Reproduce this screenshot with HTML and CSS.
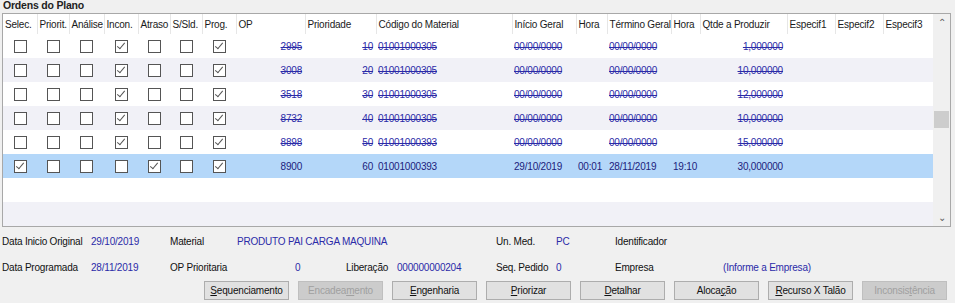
FILE: index.html
```html
<!DOCTYPE html>
<html lang="pt">
<head>
  <meta charset="UTF-8" />
  <title>Ordens do Plano</title>
  <link rel="stylesheet" href="styles.css">
</head>
<body>
  <div class="group-title">Ordens do Plano</div>

  <div class="grid-box">
    <div class="grid-area">
      <table class="grid">
        <colgroup>
          <col style="width:34px"><col style="width:32px"><col style="width:35px"><col style="width:34px">
          <col style="width:32px"><col style="width:32px"><col style="width:34px"><col style="width:69px">
          <col style="width:71px"><col style="width:136px"><col style="width:64px"><col style="width:31px">
          <col style="width:64px"><col style="width:29px"><col style="width:87px"><col style="width:48px">
          <col style="width:48px"><col style="width:50px">
        </colgroup>
        <thead>
          <tr>
            <th>Selec.</th><th>Priorit.</th><th>Análise</th><th>Incon.</th><th>Atraso</th><th>S/Sld.</th><th>Prog.</th>
            <th>OP</th><th>Prioridade</th><th>Código do Material</th><th>Início Geral</th><th>Hora</th>
            <th>Término Geral</th><th>Hora</th><th>Qtde a Produzir</th><th>Especif1</th><th>Especif2</th><th>Especif3</th>
          </tr>
        </thead>
        <tbody>
          <tr class="done">
            <td><span class="cb"></span></td><td><span class="cb"></span></td><td><span class="cb"></span></td>
            <td><span class="cb on"></span></td><td><span class="cb"></span></td><td><span class="cb"></span></td><td><span class="cb on"></span></td>
            <td class="num"><s>2995</s></td><td class="num"><s>10</s></td><td><s>01001000305</s></td><td><s>00/00/0000</s></td><td></td>
            <td><s>00/00/0000</s></td><td></td><td class="num"><s>1,000000</s></td><td></td><td></td><td></td>
          </tr>
          <tr class="done alt">
            <td><span class="cb"></span></td><td><span class="cb"></span></td><td><span class="cb"></span></td>
            <td><span class="cb on"></span></td><td><span class="cb"></span></td><td><span class="cb"></span></td><td><span class="cb on"></span></td>
            <td class="num"><s>3008</s></td><td class="num"><s>20</s></td><td><s>01001000305</s></td><td><s>00/00/0000</s></td><td></td>
            <td><s>00/00/0000</s></td><td></td><td class="num"><s>10,000000</s></td><td></td><td></td><td></td>
          </tr>
          <tr class="done">
            <td><span class="cb"></span></td><td><span class="cb"></span></td><td><span class="cb"></span></td>
            <td><span class="cb on"></span></td><td><span class="cb"></span></td><td><span class="cb"></span></td><td><span class="cb on"></span></td>
            <td class="num"><s>3518</s></td><td class="num"><s>30</s></td><td><s>01001000305</s></td><td><s>00/00/0000</s></td><td></td>
            <td><s>00/00/0000</s></td><td></td><td class="num"><s>12,000000</s></td><td></td><td></td><td></td>
          </tr>
          <tr class="done alt">
            <td><span class="cb"></span></td><td><span class="cb"></span></td><td><span class="cb"></span></td>
            <td><span class="cb on"></span></td><td><span class="cb"></span></td><td><span class="cb"></span></td><td><span class="cb on"></span></td>
            <td class="num"><s>8732</s></td><td class="num"><s>40</s></td><td><s>01001000305</s></td><td><s>00/00/0000</s></td><td></td>
            <td><s>00/00/0000</s></td><td></td><td class="num"><s>10,000000</s></td><td></td><td></td><td></td>
          </tr>
          <tr class="done">
            <td><span class="cb"></span></td><td><span class="cb"></span></td><td><span class="cb"></span></td>
            <td><span class="cb on"></span></td><td><span class="cb"></span></td><td><span class="cb"></span></td><td><span class="cb on"></span></td>
            <td class="num"><s>8898</s></td><td class="num"><s>50</s></td><td><s>01001000393</s></td><td><s>00/00/0000</s></td><td></td>
            <td><s>00/00/0000</s></td><td></td><td class="num"><s>15,000000</s></td><td></td><td></td><td></td>
          </tr>
          <tr class="selected">
            <td><span class="cb on"></span></td><td><span class="cb"></span></td><td><span class="cb"></span></td>
            <td><span class="cb"></span></td><td><span class="cb on"></span></td><td><span class="cb"></span></td><td><span class="cb on"></span></td>
            <td class="num">8900</td><td class="num">60</td><td>01001000393</td><td>29/10/2019</td><td>00:01</td>
            <td>28/11/2019</td><td>19:10</td><td class="num">30,000000</td><td></td><td></td><td></td>
          </tr>
          <tr class="empty"><td colspan="18"></td></tr>
          <tr class="empty alt"><td colspan="18"></td></tr>
        </tbody>
      </table>
    </div>
    <div class="scrollbar">
      <span class="arrow">&#x2303;</span>
      <div class="track"><div class="thumb"></div></div>
      <span class="arrow">&#x2304;</span>
    </div>
  </div>

  <div class="info">
    <span>Data Inicio Original</span>
    <span class="val">29/10/2019</span>
    <span>Material</span>
    <span class="val wide">PRODUTO PAI CARGA MAQUINA</span>
    <span>Un. Med.</span>
    <span class="val">PC</span>
    <span>Identificador</span>
    <span></span>

    <span>Data Programada</span>
    <span class="val">28/11/2019</span>
    <span class="span2">OP Prioritaria</span>
    <span class="val">0</span>
    <span>Liberação</span>
    <span class="val">000000000204</span>
    <span>Seq. Pedido</span>
    <span class="val">0</span>
    <span>Empresa</span>
    <span class="val">(Informe a Empresa)</span>
  </div>

  <div class="buttons">
    <button><u>S</u>equenciamento</button>
    <button disabled>Encadea<u>m</u>ento</button>
    <button><u>E</u>ngenharia</button>
    <button><u>P</u>riorizar</button>
    <button><u>D</u>etalhar</button>
    <button>Aloca<u>ç</u>ão</button>
    <button><u>R</u>ecurso X Talão</button>
    <button disabled>Inconsis<u>t</u>ência</button>
  </div>
</body>
</html>
```

FILE: styles.css
```css
body {
  margin: 0;
  background: #f0f0f0;
  font-family: 'Liberation Sans', Arial, sans-serif;
  font-size: 10px;
  letter-spacing: -0.2px;
  color: #111;
}

.group-title {
  height: 13px;
  line-height: 11px;
  padding-left: 3px;
  font-weight: bold;
  font-size: 10.5px;
  color: #222;
}

.grid-box {
  display: flex;
  margin: 0 4px 0 2px;
  height: 212px;
  border: 1px solid #a8a8a8;
  background: #fff;
}

.grid-area {
  width: 930px;
  overflow: hidden;
}

.grid {
  table-layout: fixed;
  border-collapse: collapse;
  width: 930px;
}

.grid th {
  height: 20px;
  padding: 0 0 0 2px;
  text-align: left;
  font-weight: normal;
  color: #1a1a1a;
  border-right: 1px solid #e6e6e6;
  white-space: nowrap;
  overflow: hidden;
}

.grid td {
  height: 24px;
  padding: 0 2px;
  white-space: nowrap;
  overflow: hidden;
  color: #2b2ba8;
}

.grid td:nth-child(-n+7) {
  text-align: center;
  padding: 0;
}

.grid td.num {
  text-align: right;
  padding-right: 3px;
}

.grid td:nth-child(15) {
  padding-right: 4px;
}

.grid tr.alt td {
  background: #f1f1f7;
}

.grid tr.selected td {
  background: #b4d7f9;
  color: #1c1c7c;
}

.cb {
  display: inline-block;
  width: 11px;
  height: 11px;
  border: 1px solid #555;
  background: #fff;
  vertical-align: middle;
  position: relative;
}

.cb.on::after {
  content: "";
  position: absolute;
  left: 3px;
  top: 0px;
  width: 3px;
  height: 7px;
  border: solid #555;
  border-width: 0 1.2px 1.2px 0;
  transform: rotate(40deg);
}

.scrollbar {
  width: 17px;
  display: flex;
  flex-direction: column;
  background: #f0f0f0;
}

.arrow {
  height: 17px;
  line-height: 17px;
  text-align: center;
  font-size: 10px;
  color: #606060;
}

.track {
  flex: 1;
  padding-top: 80px;
}

.thumb {
  margin: 0 1px;
  height: 17px;
  background: #cdcdcd;
}

.info {
  display: grid;
  grid-template-columns: 89px 79px 67px 58px 51px 51px 99px 60px 59px 108px auto;
  grid-auto-rows: 26px;
  align-items: center;
  padding: 1px 0 0 2px;
  white-space: nowrap;
}

.info .val {
  color: #2b2ba8;
}

.info .wide {
  grid-column: span 4;
}

.info .span2 {
  grid-column: span 2;
}

.buttons {
  display: flex;
  justify-content: flex-end;
  gap: 9px;
  padding: 1px 8px 0 0;
}

.buttons button {
  width: 85px;
  height: 19px;
  padding: 0;
  font-family: inherit;
  font-size: 10px;
  letter-spacing: -0.2px;
  color: #111;
  background: #e1e1e1;
  border: 1px solid #adadad;
  border-radius: 0;
}

.buttons button:disabled {
  background: #cccccc;
  border-color: #bfbfbf;
  color: #a0a0a0;
}
```
